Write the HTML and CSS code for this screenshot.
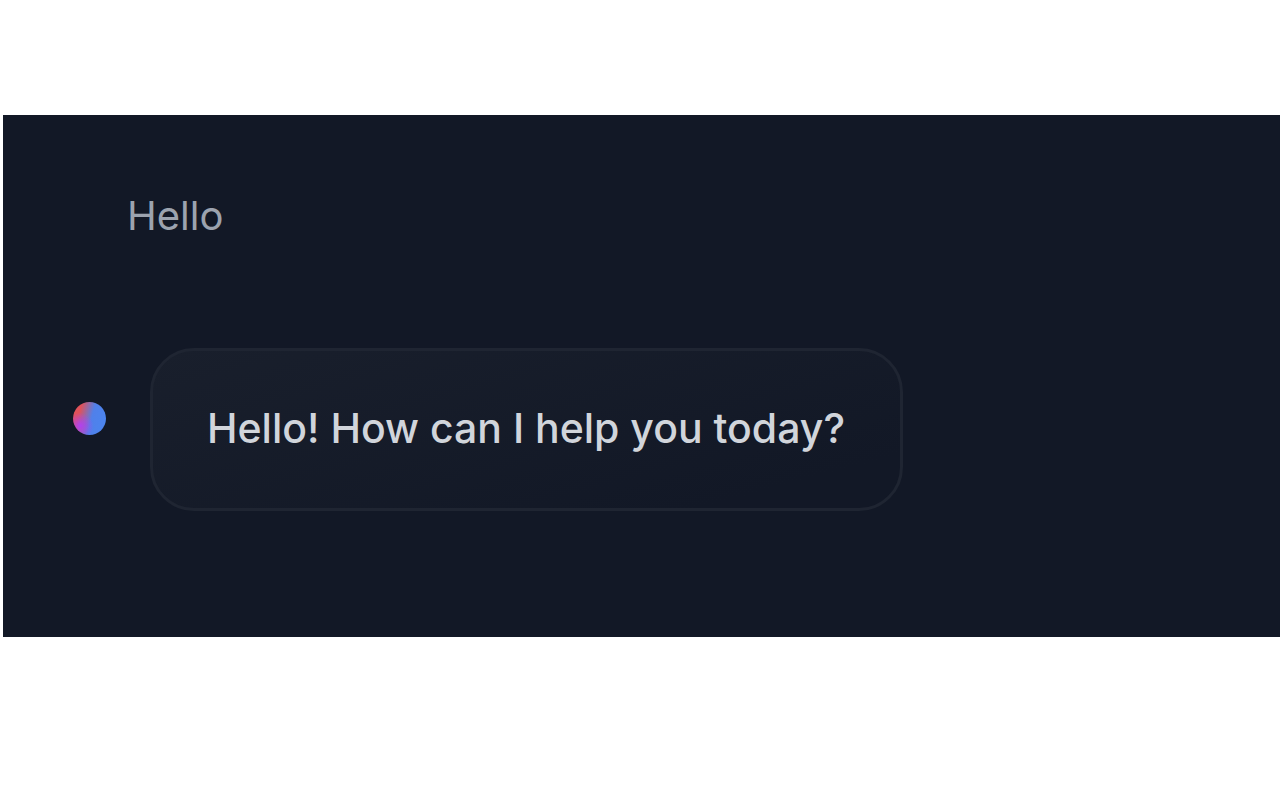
FILE: index.html
```html
<!DOCTYPE html>
<html lang="en">
  <head>
    <meta charset="UTF-8">
    <meta name="viewport" content="width=device-width, initial-scale=1.0">
    <title>Chat</title>
    <link rel="stylesheet" href="styles.css">
  </head>
  <body>
    <main class="chat">
      <p class="user-message">Hello</p>
      <div class="reply">
        <span class="avatar"></span>
        <p class="bubble">Hello! How can I help you today?</p>
      </div>
    </main>
  </body>
</html>
```

FILE: styles.css
```css
body {
  margin: 0;
  background-color: #fff;
  font-family: Inter, "Liberation Sans", sans-serif;
}

p {
  margin: 0;
}

.chat {
  margin: 115px 0 0 3px;
  padding: 76px 70px 126px;
  background-color: #121826;
}

.user-message {
  margin-left: 54px;
  color: #9ca3af;
  font-size: 40px;
  line-height: 50px;
}

.reply {
  display: flex;
  align-items: center;
  gap: 44px;
  margin-top: 107px;
}

.avatar {
  flex: none;
  width: 33px;
  height: 33px;
  margin-bottom: 22px;
  border-radius: 50%;
  background:
    radial-gradient(circle at 22% 72%, #b041f0 0%, rgba(176, 65, 240, 0) 38%),
    linear-gradient(105deg, #e0525a 22%, #5080ea 55%, #4a86f0 100%);
}

.bubble {
  padding: 52px 55px 55px 54px;
  border: 3px solid #1f2532;
  border-radius: 44px;
  background: linear-gradient(165deg, #191f2c, #121826 85%);
  color: #d1d5db;
  font-size: 41px;
  font-weight: 500;
  line-height: 50px;
}
```
